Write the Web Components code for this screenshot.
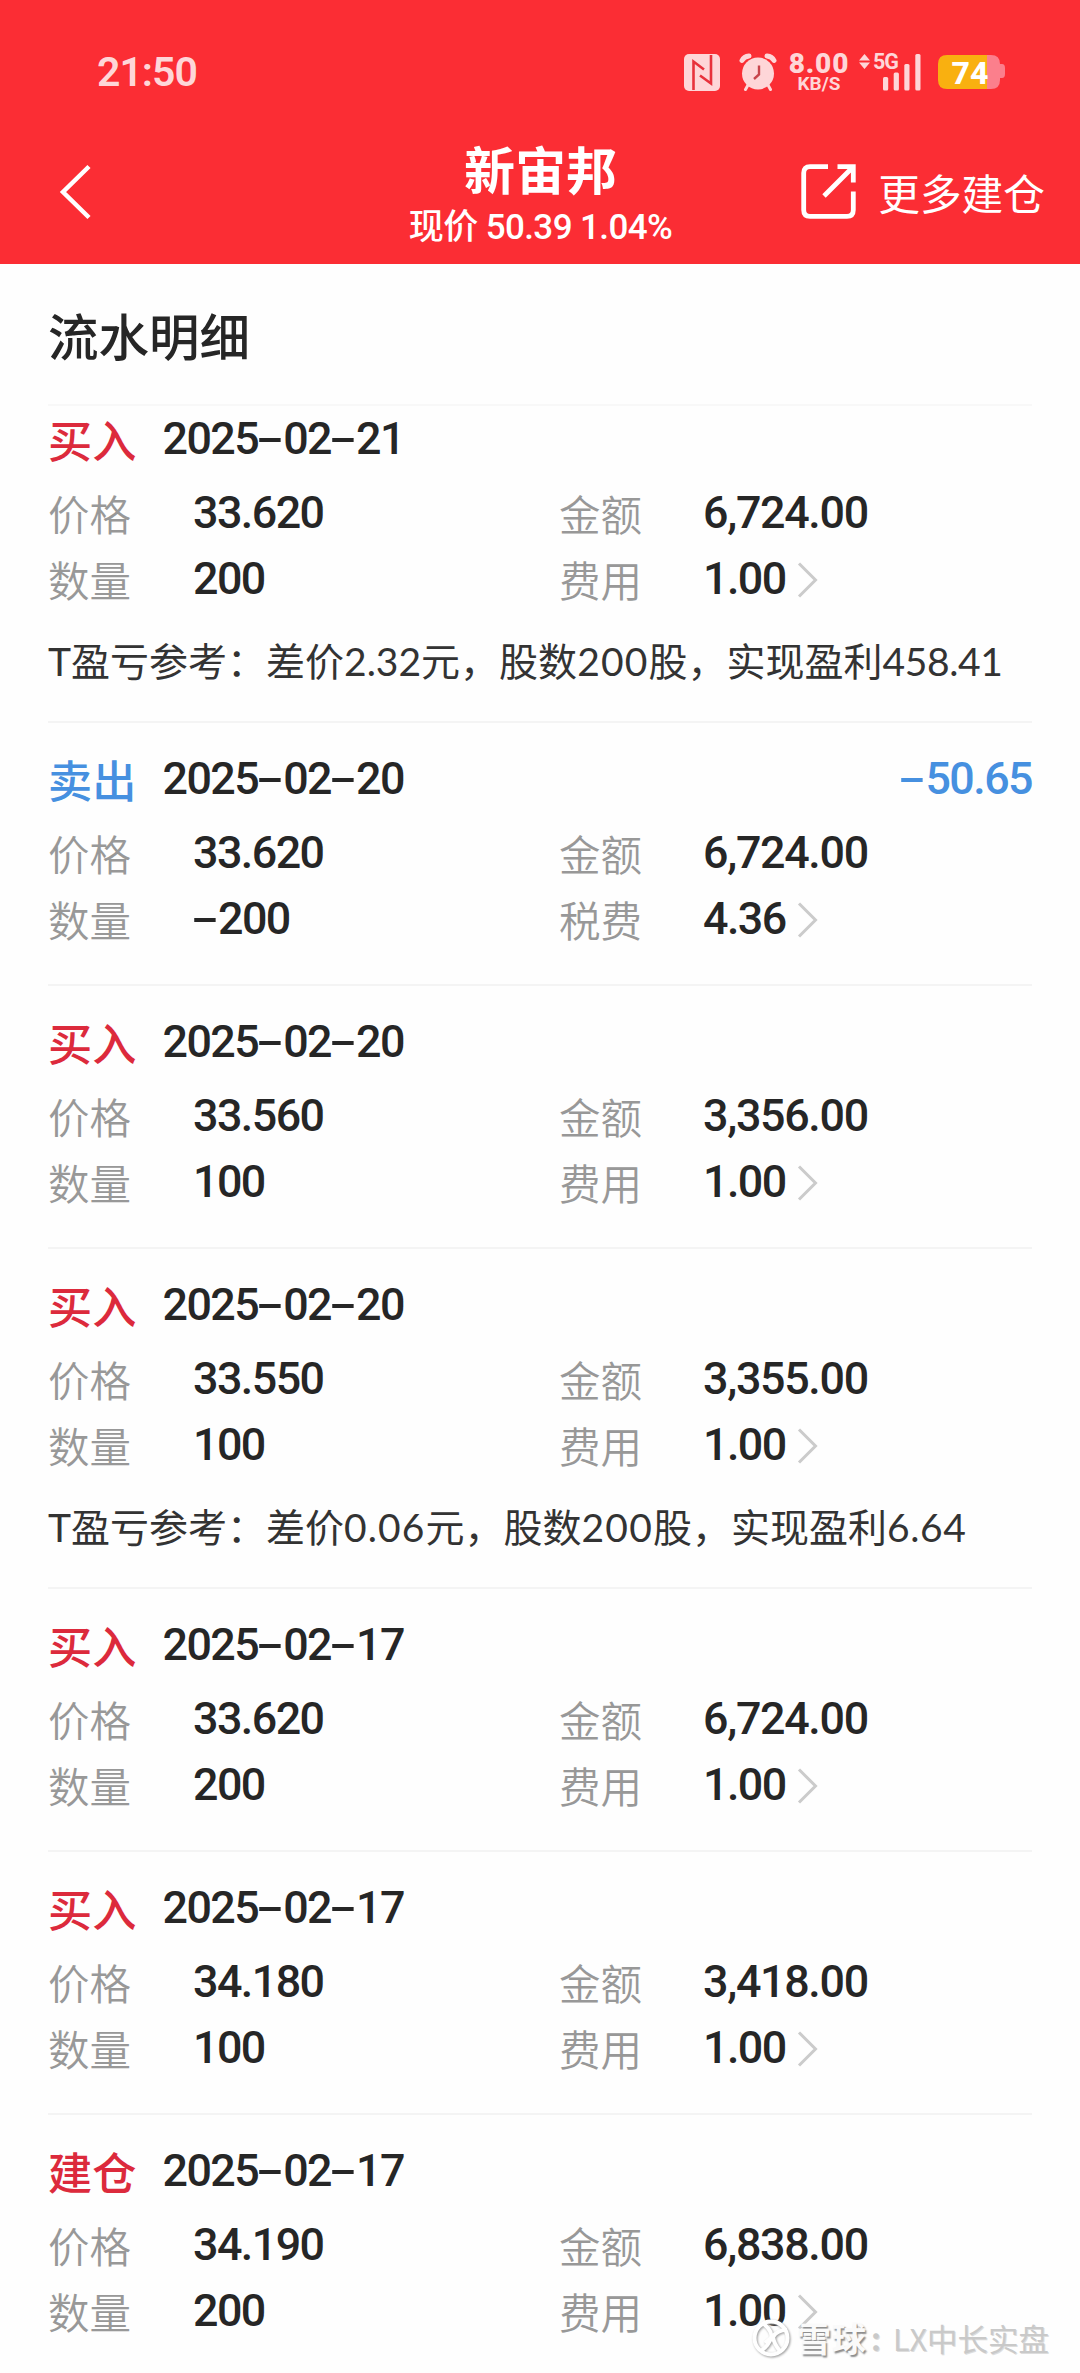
<!DOCTYPE html>
<html lang="zh-CN">
<head>
<meta charset="utf-8">
<title>流水明细</title>
<style>
  html, body { margin: 0; padding: 0; background: #fefefe; }
  body {
    width: 1080px;
    height: 2373px;
    overflow: hidden;
    font-family: Roboto, "Noto Sans CJK SC", sans-serif;
    color: #262626;
    --red: #fb2d34;
    --buy: #dc2a3c;
    --sell: #4690e0;
    --muted: #989898;
    --cjk: "Noto Sans CJK SC", sans-serif;
  }
</style>
</head>
<body>
<app-shell></app-shell>

<script>
// <status-bar>: hora del sistema e iconos
const statusTpl = document.createElement('template');
statusTpl.innerHTML = /* html */`
  <style>
    :host{ display:flex; height:144px; box-sizing:border-box; padding:0 75px 0 97px; color:#fed6d8; align-items:center; justify-content:space-between; }
    .time{ font-size:41px; line-height:41px; font-weight:600; letter-spacing:-1px; }
    .icons{ display:flex; align-items:center; height:40px; }
    .icons svg{ display:block; flex:none; }
    .nfc{ margin-right:19px; }
    .alarm{ margin-right:12px; }
    .speed{ width:60px; margin-right:10px; display:flex; flex-direction:column; align-items:center; font-weight:700; }
    .speed b{ font-size:28px; line-height:22px; letter-spacing:.8px; }
    .speed span{ font-size:19px; line-height:17px; font-weight:700; }
    .cell{ display:flex; margin-right:17px; width:62px; height:38px; position:relative; }
    .cell span{ position:absolute; left:14px; top:1px; font-size:21.5px; line-height:16px; font-weight:700; letter-spacing:-1.2px; }
    .batt{ position:relative; width:67px; height:36px; }
    .batt span{ position:absolute; left:1px; top:1px; width:62px; text-align:center; font-size:32px; line-height:36px; font-weight:800; color:#fff; }
  </style>
  <div class="time">21:50</div>
  <div class="icons">
    <svg class="nfc" width="36" height="37" viewBox="0 0 36 37">
      <rect width="36" height="37" rx="5" fill="currentColor"/>
      <path d="M9.500 36V7.500L20 15.500M27 1V29.500L16 21.500" fill="none" stroke="#e8323c" stroke-width="2.600"/>
    </svg>
    <svg class="alarm" width="38" height="38" viewBox="0 0 38 38">
      <g fill="none" stroke="currentColor" stroke-linecap="round">
        <path d="M3 7.500Q5 3.500 10 3M35 7.500Q33 3.500 28 3" stroke-width="5"/>
        <path d="M9 32L6.500 36.500M29 32L31.500 36.500" stroke-width="3"/>
      </g>
      <circle cx="19" cy="20.500" r="16" fill="currentColor"/>
      <path d="M20 12.500V21.500L15 26" fill="none" stroke="#c8454c" stroke-width="2.400"/>
    </svg>
    <div class="speed"><b>8.00</b><span>KB/S</span></div>
    <div class="cell">
      <svg width="62" height="38" viewBox="0 0 62 38" fill="currentColor">
        <path d="M0 7.500L5.500 1L11 7.500ZM0 9.500H11L5.500 16Z"/>
        <rect x="24" y="24" width="5.200" height="13.500" rx="1.500"/>
        <rect x="34.700" y="19.500" width="5.200" height="18" rx="1.500"/>
        <rect x="45.300" y="11" width="5.200" height="26.500" rx="1.500"/>
        <rect x="56.300" y="1" width="5.200" height="36.500" rx="1.500"/>
      </svg>
      <span>5G</span>
    </div>
    <div class="batt">
      <svg width="67" height="36" viewBox="0 0 67 36">
        <path d="M61 10H64Q67 10 67 14V20Q67 24 64 24H61Z" fill="#fb7f8c"/>
        <path d="M49 1H53Q62 1 62 10V26Q62 35 53 35H49Z" fill="#fb7f8c"/>
        <path d="M49 1H9Q0 1 0 10V26Q0 35 9 35H49Z" fill="#f9b010"/>
      </svg>
      <span>74</span>
    </div>
  </div>
`;

class StatusBar extends HTMLElement {
  constructor(){
    super();
    this.attachShadow({ mode: 'open' });
    this.shadowRoot.appendChild(statusTpl.content.cloneNode(true));
  }
}

// <nav-bar>: slots title, sub y action
const navTpl = document.createElement('template');
navTpl.innerHTML = /* html */`
  <style>
    :host{ display:grid; grid-template-columns:1fr auto 1fr; height:120px; box-sizing:border-box; padding:0 35px 0 58px; color:#fff; }
    .back{ padding-top:20px; }
    .back svg, .action svg{ display:block; }
    .mid{ display:flex; flex-direction:column; align-items:center; margin-left:-22px; }
    .title{ font-family:var(--cjk); font-size:51px; line-height:56px; font-weight:600; margin-top:-4px; }
    .sub{ font-size:35px; line-height:40px; font-weight:500; letter-spacing:-.6px; white-space:pre; margin-top:12px; }
    .action{ display:flex; justify-content:flex-end; padding-top:20px; height:56px; }
    .action span{ font-family:var(--cjk); font-size:41.7px; line-height:56px; margin-left:22px; }
  </style>
  <div class="back">
    <svg width="36" height="56" viewBox="0 0 36 56"><path d="M31 2.500L5 28L31 53.500" fill="none" stroke="#fff" stroke-width="4.500"/></svg>
  </div>
  <div class="mid">
    <div class="title"><slot name="title"></slot></div>
    <div class="sub"><slot name="sub"></slot></div>
  </div>
  <div class="action">
    <svg width="55" height="55" viewBox="0 0 55 55" fill="none" stroke="#fff" stroke-width="4.800">
      <path d="M27 2.700H9Q2.700 2.700 2.700 9V46Q2.700 52.300 9 52.300H46Q52.300 52.300 52.300 46V27.500"/>
      <path d="M36.500 2.700H52.300V18.500M51.500 3.500L23 32"/>
    </svg>
    <span><slot name="action"></slot></span>
  </div>
`;

class NavBar extends HTMLElement {
  constructor(){
    super();
    this.attachShadow({ mode: 'open' });
    this.shadowRoot.appendChild(navTpl.content.cloneNode(true));
  }
}

// <num-text value="...">: cifras con guion ancho, como una fuente DIN
class NumText extends HTMLElement {
  constructor(){
    super();
    this.attachShadow({ mode: 'open' });
    this.shadowRoot.innerHTML = /* html */`
      <style>
        :host{ display:block; font-size:44.8px; line-height:66px; font-weight:500; letter-spacing:-1.55px; white-space:nowrap; }
        i{ display:inline-block; font-style:normal; width:25px; text-align:center; letter-spacing:0; transform:translateX(-.5px) scale(1.85,.95); }
      </style>
      <span id="out"></span>
    `;
  }
  connectedCallback(){
    const val = this.getAttribute('value') || '';
    this.shadowRoot.getElementById('out').innerHTML = val.replace(/-/g, '<i>-</i>');
  }
}

// ajuste de ancho por cifra (px) para las notas
const DIGIT_FIX = { 0: 1.8, 1: -4, 4: .8, 6: .8 };

function spaceNumbers(text){
  return text.replace(/[\d.]+/g, run => {
    let sum = 0;
    for(const ch of run) sum += DIGIT_FIX[ch] || 0;
    return `<span style="letter-spacing:${(sum / run.length).toFixed(2)}px">${run}</span>`;
  });
}

// <trade-item>: recibe .trade = { kind, type, date, price, amount, qty, feeLabel, fee, profit, note }
const itemTpl = document.createElement('template');
itemTpl.innerHTML = /* html */`
  <style>
    :host{ display:block; box-sizing:border-box; padding:23px 0 32px; border-bottom:2px solid #f4f4f4; }
    :host([first]){ padding-top:0; }
    .head{ display:flex; height:66px; margin-bottom:8px; }
    .kind{ width:114.500px; font-family:var(--cjk); font-size:44.200px; line-height:67px; font-weight:500; color:var(--buy); }
    .kind.sell, .profit{ color:var(--sell); }
    .profit{ margin-left:auto; }
    #amount{ letter-spacing:-1.3px; }
    .grid{ display:grid; grid-template-columns:145px 366px 144px 1fr; grid-auto-rows:66px; }
    .label{ font-family:var(--cjk); font-size:41.500px; line-height:67px; font-weight:350; color:var(--muted); }
    .fee{ display:flex; }
    .fee svg{ display:block; margin:16px 0 0 11px; }
    .note{ padding-top:21px; height:56px; font-family:Lato, var(--cjk); font-size:39px; line-height:56px; color:#333; white-space:nowrap; }
  </style>
  <div class="head">
    <span class="kind" id="kind"></span>
    <num-text id="date"></num-text>
    <num-text id="profit" class="profit"></num-text>
  </div>
  <div class="grid">
    <span class="label">价格</span><num-text id="price"></num-text>
    <span class="label">金额</span><num-text id="amount"></num-text>
    <span class="label">数量</span><num-text id="qty"></num-text>
    <span class="label" id="feeLabel"></span>
    <div class="fee">
      <num-text id="fee"></num-text>
      <svg width="22" height="36" viewBox="0 0 22 36"><path d="M2 1.500L18.500 18L2 34.500" fill="none" stroke="#cbcbcb" stroke-width="3"/></svg>
    </div>
  </div>
  <div class="note" id="note" hidden></div>
`;

class TradeItem extends HTMLElement {
  constructor(){
    super();
    this.attachShadow({ mode: 'open' });
    this.shadowRoot.appendChild(itemTpl.content.cloneNode(true));
  }

  set trade(t){
    const $ = id => this.shadowRoot.getElementById(id);
    $('kind').textContent = t.kind;
    $('kind').classList.toggle('sell', t.type === 'sell');
    for(const k of ['date', 'price', 'amount', 'qty', 'fee']) $(k).setAttribute('value', t[k]);
    $('feeLabel').textContent = t.feeLabel || '费用';
    if(t.profit) $('profit').setAttribute('value', t.profit);
    else $('profit').remove();
    if(t.note){
      $('note').innerHTML = spaceNumbers(t.note);
      $('note').hidden = false;
    } else {
      $('note').remove();
    }
  }
}

// <trade-list>: titulo (slot) + un <trade-item> por operación
class TradeList extends HTMLElement {
  constructor(){
    super();
    this.attachShadow({ mode: 'open' });
    this.shadowRoot.innerHTML = /* html */`
      <style>
        :host{ display:block; padding:0 48px; }
        .title{ height:140px; font-family:var(--cjk); font-size:50.500px; line-height:141px; font-weight:500; border-bottom:2px solid #f8f8f8; }
      </style>
      <div class="title"><slot></slot></div>
      <div id="list"></div>
    `;
  }
  set trades(arr){
    const $list = this.shadowRoot.getElementById('list');
    $list.innerHTML = '';
    arr.forEach((t, i) => {
      const item = document.createElement('trade-item');
      if(i === 0) item.setAttribute('first', '');
      item.trade = t;
      $list.appendChild(item);
    });
  }
}

// <water-mark>: marca sobre la esquina inferior
class WaterMark extends HTMLElement {
  constructor(){
    super();
    this.attachShadow({ mode: 'open' });
    this.shadowRoot.innerHTML = /* html */`
      <style>
        :host{ position:absolute; left:752px; top:2315px; display:flex; align-items:center; height:46px; font-family:var(--cjk); white-space:nowrap; }
        svg{ display:block; margin-right:5px; filter:drop-shadow(1.500px 1.500px 1px #999); }
        b{ font-size:34px; line-height:46px; font-weight:700; letter-spacing:1px; color:#fafafa; text-shadow:1.500px 1.500px 1.500px #8c8c8c; }
        span{ font-size:30.500px; line-height:46px; color:#c9c9c9; text-shadow:1px 1px 0 #ddd; }
        .colon{ width:22px; padding-left:4px; font-weight:700; }
      </style>
      <svg width="40" height="42" viewBox="0 0 40 42" fill="none" stroke="#fff" stroke-width="4">
        <circle cx="19" cy="21" r="16.500"/>
        <path d="M12 7Q21 15 19 21Q17 28 9 34M35 13Q25 13 21 20Q22 27 28 34M20 20L13 26"/>
      </svg>
      <b>雪球</b><span class="colon">:</span><span>LX中长实盘</span>
    `;
  }
}

class AppShell extends HTMLElement {
  constructor(){
    super();
    this.attachShadow({ mode: 'open' });
    this.shadowRoot.innerHTML = /* html */`
      <style>
        :host{ display:block; position:relative; height:2373px; overflow:hidden; }
        header{ background:var(--red); height:264px; }
      </style>
      <header>
        <status-bar></status-bar>
        <nav-bar>
          <span slot="title">新宙邦</span>
          <span slot="sub">现价 50.39 1.04%</span>
          <span slot="action">更多建仓</span>
        </nav-bar>
      </header>
      <trade-list id="trades">流水明细</trade-list>
      <water-mark></water-mark>
    `;
  }
  connectedCallback(){
    this.shadowRoot.getElementById('trades').trades = [
      { kind:'买入', date:'2025-02-21', price:'33.620', amount:'6,724.00', qty:'200', fee:'1.00', note:'T盈亏参考：差价2.32元，股数200股，实现盈利458.41' },
      { kind:'卖出', type:'sell', date:'2025-02-20', price:'33.620', amount:'6,724.00', qty:'-200', feeLabel:'税费', fee:'4.36', profit:'-50.65' },
      { kind:'买入', date:'2025-02-20', price:'33.560', amount:'3,356.00', qty:'100', fee:'1.00' },
      { kind:'买入', date:'2025-02-20', price:'33.550', amount:'3,355.00', qty:'100', fee:'1.00', note:'T盈亏参考：差价0.06元，股数200股，实现盈利6.64' },
      { kind:'买入', date:'2025-02-17', price:'33.620', amount:'6,724.00', qty:'200', fee:'1.00' },
      { kind:'买入', date:'2025-02-17', price:'34.180', amount:'3,418.00', qty:'100', fee:'1.00' },
      { kind:'建仓', date:'2025-02-17', price:'34.190', amount:'6,838.00', qty:'200', fee:'1.00' },
    ];
  }
}

customElements.define('status-bar', StatusBar);
customElements.define('nav-bar', NavBar);
customElements.define('num-text', NumText);
customElements.define('trade-item', TradeItem);
customElements.define('trade-list', TradeList);
customElements.define('water-mark', WaterMark);
customElements.define('app-shell', AppShell);
</script>
</body>
</html>
